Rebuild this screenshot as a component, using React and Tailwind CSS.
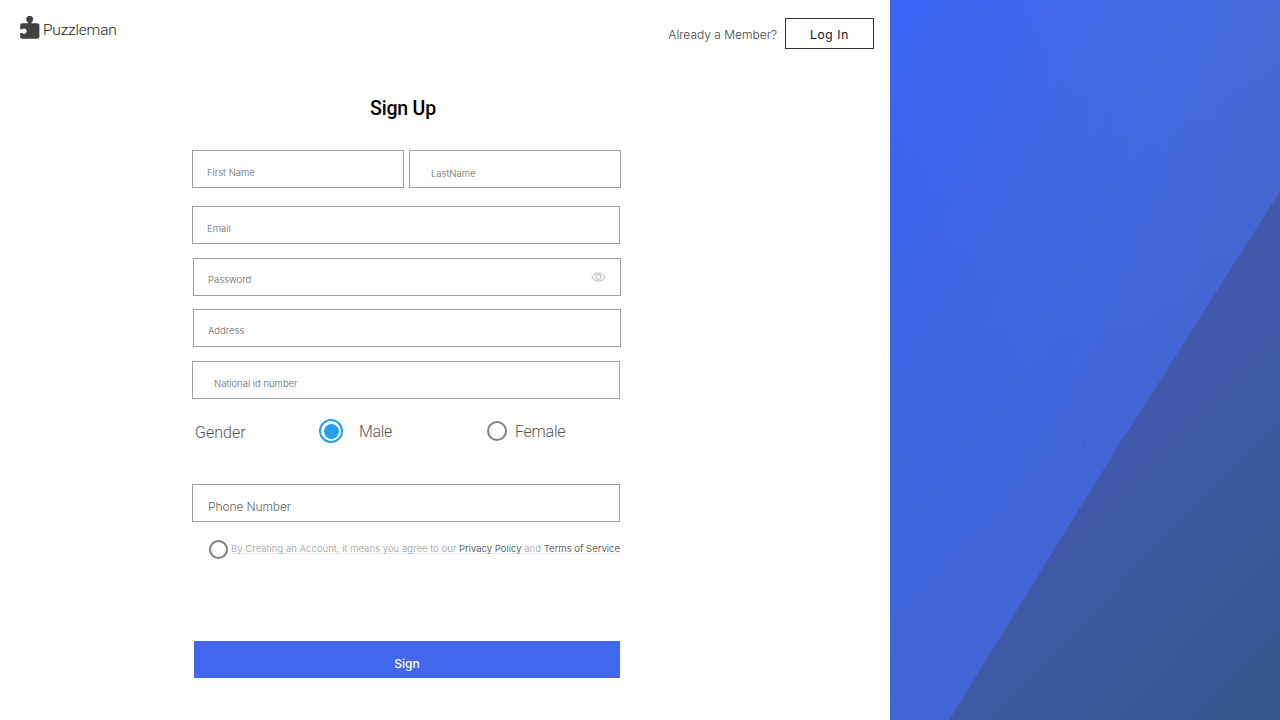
function Logo() {
  return (
    <svg className="block shrink-0" width="20" height="24" viewBox="0 0 20 24" fill="#424242">
      <path d="M2 7.2H7.9V6.2A3.5 3.5 0 1 1 11.5 6.2V7.2H17.6Q19.4 7.2 19.4 9V21Q19.4 22.8 17.6 22.8H2Q0.2 22.8 0.2 21V17.1H2.2A2.6 2.6 0 1 0 2.2 13.2H0.2V9Q0.2 7.2 2 7.2Z" />
    </svg>
  );
}

function EyeIcon() {
  return (
    <svg className="block" width="15" height="10" viewBox="0 0 15 10" fill="none" stroke="#b0b0b0" strokeWidth="0.9">
      <path d="M0.8 5C2.4 2.2 4.8 0.9 7.4 0.9S12.4 2.2 14 5C12.4 7.8 10 9.1 7.4 9.1S2.4 7.8 0.8 5Z" />
      <circle cx="7.4" cy="5" r="2.6" />
    </svg>
  );
}

function Field({ label, className, textClass = "text-[9.5px]", children }) {
  return (
    <div className={`flex h-[38px] shrink-0 border-[#a0a0a0] ${className}`}>
      <span className={`leading-4 text-[#666] ${textClass}`}>{label}</span>
      {children}
    </div>
  );
}

function Backdrop() {
  return (
    <svg className="block h-[720px] w-[390px] shrink-0" viewBox="0 0 390 720" preserveAspectRatio="none">
      <defs>
        <linearGradient id="wall" gradientUnits="userSpaceOnUse" x1="0" y1="60" x2="390" y2="180">
          <stop offset="0" stopColor="#3a66f4" />
          <stop offset="0.35" stopColor="#4168ea" />
          <stop offset="0.7" stopColor="#456ae0" />
          <stop offset="1" stopColor="#4669d2" />
        </linearGradient>
        <linearGradient id="fall" x1="0" y1="0" x2="0" y2="1">
          <stop offset="0" stopColor="#3d5fc6" stopOpacity="0" />
          <stop offset="0.25" stopColor="#3a5ccc" stopOpacity="0.15" />
          <stop offset="0.6" stopColor="#3c5fce" stopOpacity="0.4" />
          <stop offset="1" stopColor="#4163cc" stopOpacity="0.65" />
        </linearGradient>
        <linearGradient id="shade" gradientUnits="userSpaceOnUse" x1="190" y1="470" x2="415" y2="690">
          <stop offset="0" stopColor="#4059ab" />
          <stop offset="0.5" stopColor="#3c5a9d" />
          <stop offset="1" stopColor="#34548c" />
        </linearGradient>
      </defs>
      <rect width="390" height="720" fill="url(#wall)" />
      <rect width="390" height="720" fill="url(#fall)" />
      <path d="M390 191L237 433L233 438L59 720H390Z" fill="url(#shade)" />
      <g fill="#3b55a8">
        <circle cx="364.500" cy="167" r="0.7" />
        <circle cx="274.500" cy="314" r="0.8" />
        <circle cx="220" cy="398" r="0.6" />
        <circle cx="193.500" cy="446.500" r="0.9" />
      </g>
    </svg>
  );
}

export default function App() {
  return (
    <div className="flex h-[720px] w-[1280px] overflow-hidden bg-white font-['Inter',sans-serif] font-light">
      <main className="flex w-[890px] shrink-0 flex-col">
        <header className="flex h-[60px] shrink-0 items-start justify-between pr-4 pl-5">
          <div className="flex pt-4">
            <Logo />
            <span className="pt-[4px] pl-[3px] font-['Roboto',sans-serif] text-[15.5px] leading-5 tracking-[-0.18px] text-[#222]">Puzzleman</span>
          </div>
          <div className="flex pt-[18px]">
            <span className="pt-[9px] pr-2 text-[12px] leading-4 text-[#444]">Already a Member?</span>
            <button className="flex h-[31px] w-[89px] justify-center border border-[#333] pt-[8px] text-[12px] leading-4 font-normal tracking-[0.65px] text-[#111]">Log In</button>
          </div>
        </header>

        <form className="ml-48 flex w-[429px] flex-col">
          <h1 className="mt-[37px] h-[53px] pr-[7px] text-center font-['Roboto',sans-serif] text-[19.5px] leading-6 font-medium tracking-[-0.2px] text-black">Sign Up</h1>
          <div className="flex gap-[5px]">
            <Field label="First Name" className="w-[212px] border pt-[14px] pl-[14px]" />
            <Field label="LastName" className="w-[212px] border pt-[15px] pl-[21px]" />
          </div>
          <Field label="Email" className="mt-[18px] w-[428px] border pt-[14px] pl-[14px]" />
          <Field label="Password" className="mt-[14px] ml-px w-[428px] justify-between border pt-[13px] pl-[14px]">
            <span className="pr-[14px]"><EyeIcon /></span>
          </Field>
          <Field label="Address" className="mt-[13px] ml-px w-[428px] border pt-[13px] pl-[14px]" />
          <Field label="National id number" className="mt-[14px] w-[428px] border pt-[14px] pl-[21px]" />

          <div className="mt-[20px] flex h-6 font-['Roboto',sans-serif] text-[16px] leading-6 text-[#555]">
            <span className="w-[127px] pt-[2px] pl-[3px]">Gender</span>
            <span className="flex size-6 items-center justify-center rounded-full border-2 border-[#259fee]">
              <span className="size-[15px] rounded-full bg-[#259fee]" />
            </span>
            <span className="w-[144px] pt-px pl-4 tracking-[-0.3px]">Male</span>
            <span className="mt-[2px] size-[19.5px] rounded-full border-2 border-[#808080]" />
            <span className="pt-px pl-[8.5px] tracking-[-0.25px]">Female</span>
          </div>

          <Field label="Phone Number" textClass="text-[12px] tracking-[-0.1px]" className="mt-[41px] w-[428px] border pt-[14px] pl-[15px]" />

          <div className="mt-[18px] flex h-5 pl-[17px]">
            <span className="size-[19px] shrink-0 rounded-full border-2 border-[#808080]" />
            <p className="ml-[3px] h-[14px] border-b border-[#ececec] text-[9.6px] leading-[17px] tracking-[0.02px] whitespace-nowrap text-[#999]">
              By Creating an Account, it means you agree to our <a className="text-[#333]">Privacy Policy</a> and <a className="text-[#333]">Terms of Service</a>
            </p>
          </div>

          <button className="mt-[81px] ml-[2px] h-[37px] w-[426px] bg-[#4168ec] pt-[9px] text-[12px] leading-4 font-medium text-white">Sign</button>
        </form>
      </main>
      <Backdrop />
    </div>
  );
}
